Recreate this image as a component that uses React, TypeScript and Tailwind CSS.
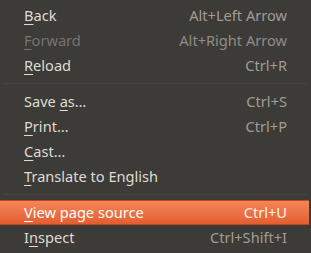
const items: (
  | { label: string; key: number; shortcut?: string; disabled?: boolean; active?: boolean }
  | 'sep'
)[] = [
  { label: 'Back', key: 0, shortcut: 'Alt+Left Arrow' },
  { label: 'Forward', key: 0, shortcut: 'Alt+Right Arrow', disabled: true },
  { label: 'Reload', key: 0, shortcut: 'Ctrl+R' },
  'sep',
  { label: 'Save as…', key: 5, shortcut: 'Ctrl+S' },
  { label: 'Print…', key: 0, shortcut: 'Ctrl+P' },
  { label: 'Cast…', key: 0 },
  { label: 'Translate to English', key: 0 },
  'sep',
  { label: 'View page source', key: 0, shortcut: 'Ctrl+U', active: true },
  { label: 'Inspect', key: 1, shortcut: 'Ctrl+Shift+I' },
];

function Label({ text, at }: { text: string; at: number }) {
  return (
    <span>
      {text.slice(0, at)}
      <span className="underline decoration-1 underline-offset-[3px]">{text[at]}</span>
      {text.slice(at + 1)}
    </span>
  );
}

export default function App() {
  return (
    <div
      className="w-[311px] h-[253px] bg-[#3c3b37] pt-[3px] text-[14.6px] overflow-hidden"
      style={{ fontFamily: '"Noto Sans", "Open Sans", sans-serif' }}
    >
      {items.map((it, i) =>
        it === 'sep' ? (
          <div key={i} className="h-[11px] flex items-center px-[4px]">
            <div className="w-full h-px bg-[#2e2d2a] border-b border-[#45443f]" />
          </div>
        ) : (
          <div
            key={i}
            className={
              it.active
                ? 'h-[25px] mr-[2px] flex items-center justify-between pl-[24px] pr-[22px] bg-gradient-to-b from-[#f4865a] to-[#e45d2f] border-y border-[#c2461b] text-white'
                : 'h-[25px] flex items-center justify-between pl-[24px] pr-[24px] ' +
                  (it.disabled ? 'text-[#76746e]' : 'text-[#dfdbd2]')
            }
          >
            <Label text={it.label} at={it.key} />
            {it.shortcut && (
              <span
                className={
                  it.active ? 'text-[#fff1ea]' : it.disabled ? 'text-[#8f8d87]' : 'text-[#a09d96]'
                }
              >
                {it.shortcut}
              </span>
            )}
          </div>
        )
      )}
    </div>
  );
}
